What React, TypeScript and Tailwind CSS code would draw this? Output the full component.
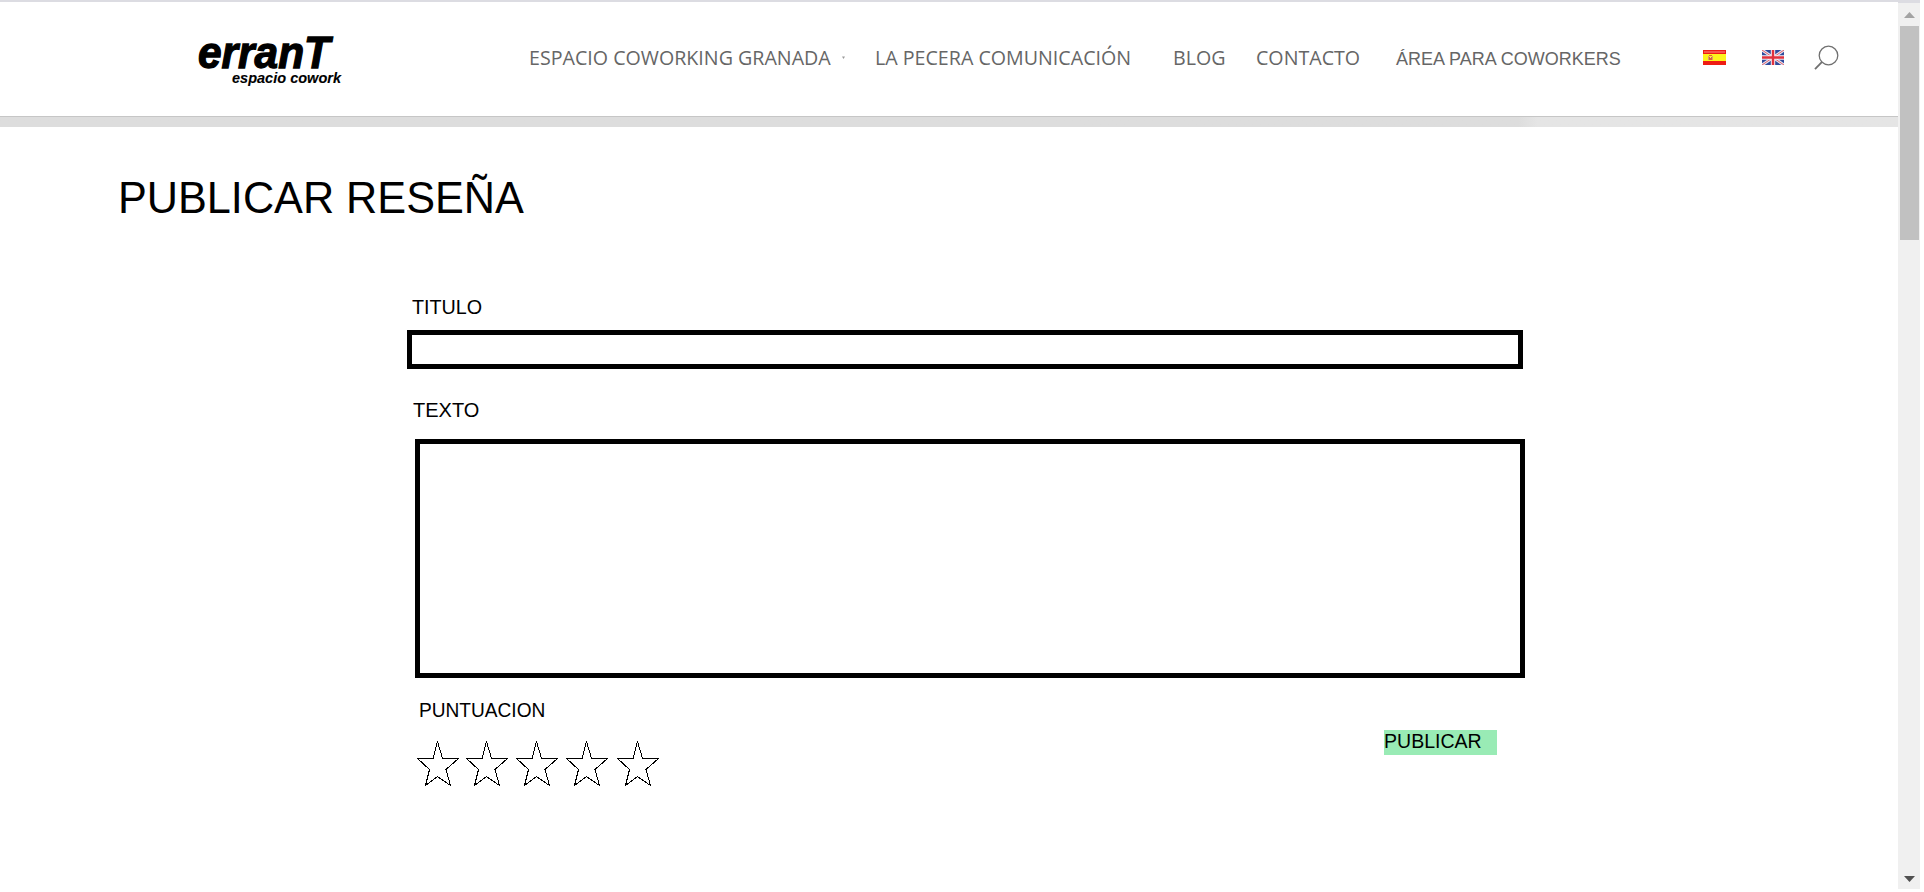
const STAR_GAPS = ["", "ml-[6px]", "ml-[7px]", "ml-[7px]", "ml-[8px]"];

function Logo() {
  return (
    <svg className="block h-[70px] w-[170px] shrink-0 overflow-visible" viewBox="0 0 170 70" fontFamily="'Liberation Sans', Arial, sans-serif" fontWeight="bold" fontStyle="italic" fill="#000" stroke="#000">
      <text x="8" y="37.800" fontSize="45" strokeWidth="1.300" textLength="132" lengthAdjust="spacingAndGlyphs">erranT</text>
      <text x="42" y="52.600" fontSize="15" strokeWidth="0.1" textLength="109" lengthAdjust="spacingAndGlyphs">espacio cowork</text>
    </svg>
  );
}

function SpainFlag() {
  return (
    <svg className="ml-[81px] mt-[48px] block h-[15px] w-[23px] shrink-0" viewBox="0 0 23 15">
      <rect width="23" height="15" fill="#ee1c14" />
      <rect x="1" y="1" width="21" height="2" fill="#f7544c" />
      <rect y="4" width="23" height="7" fill="#fdf31c" />
      <path d="M5 6h1v4H5zM9 6h1v4H9z" fill="#d8a06a" />
      <path d="M6 5h3v1H6zM6 7h3v3H6z" fill="#d5643c" />
      <path d="M7 7h1v1H7z" fill="#f5c8b0" />
    </svg>
  );
}

function UkFlag() {
  return (
    <svg className="ml-[36px] mt-[48px] block h-[15px] w-[22px] shrink-0" viewBox="0 0 22 15">
      <rect width="22" height="15" fill="#2f4a9c" />
      <path d="M0 0L22 15M22 0L0 15" stroke="#e6e6f2" strokeWidth="3" />
      <path d="M0 0L22 15M22 0L0 15" stroke="#e2606c" strokeWidth="1" />
      <path d="M11 0V15M0 7.5H22" stroke="#f4f0f6" strokeWidth="4.400" />
      <path d="M11 0V15M0 7.5H22" stroke="#e0323e" strokeWidth="2.400" />
    </svg>
  );
}

function SearchIcon() {
  return (
    <svg className="ml-[30px] mt-[43px] block h-[26px] w-[26px] shrink-0" viewBox="0 0 26 26" fill="none" stroke="#707070">
      <circle cx="14.500" cy="10.500" r="9.300" strokeWidth="1.300" />
      <path d="M7.800 17.100L1 24.100" strokeWidth="1.800" />
    </svg>
  );
}

function Star({ gap }: { gap: string }) {
  return (
    <svg className={`${gap} block h-[46px] w-[43px] shrink-0`} viewBox="0 0 43 46" fill="none" stroke="#000" strokeWidth="1" shapeRendering="crispEdges">
      <path d="M20.500 0.500L25.500 17.500H41.500L29 28.500L33.500 44.500L20.500 35.500L8.500 44.500L12.500 28.500L0.500 17.500H16Z" />
    </svg>
  );
}

function Scrollbar() {
  return (
    <div className="flex h-[889px] w-[22px] shrink-0 flex-col items-center justify-between border-t-[3px] border-[#dcdce2] bg-[#f0f0f0]">
      <div className="flex flex-col items-center">
        <svg className="block h-[23px] w-[22px]" viewBox="0 0 22 23"><path d="M6 15L11.500 9L17 15Z" fill="#a3a3a3" /></svg>
        <div className="h-[214px] w-[19px] bg-[#c1c1c1]" />
      </div>
      <svg className="block h-[17px] w-[22px]" viewBox="0 0 22 17"><path d="M6 4H17L11.500 10Z" fill="#505050" /></svg>
    </div>
  );
}

export default function App() {
  const nav = "mt-[42px] shrink-0 whitespace-nowrap font-['Open_Sans',sans-serif] text-[19.65px] leading-[28px] text-[#666]";
  const label = "h-[24px] origin-left self-start whitespace-nowrap text-[21px] leading-[22px]";
  return (
    <div className="flex h-[892px] w-[1924px] overflow-hidden bg-white font-['Liberation_Sans',Arial,sans-serif] text-black">
      <div className="flex w-[1898px] shrink-0 flex-col">
        <header className="flex h-[117px] shrink-0 items-start border-t-[2px] border-b border-t-[#dcdce2] border-b-[#c6c6c6]">
          <div className="ml-[190px] mt-[28px]"><Logo /></div>
          <nav className="flex items-start">
            <a className={`${nav} ml-[169px] w-[317px]`}>ESPACIO COWORKING GRANADA</a>
            <svg className="mt-[54px] -ml-[5px] block h-[4px] w-[5px] shrink-0" viewBox="0 0 5 4"><path d="M1 0.500H4L2.500 3Z" fill="#999" /></svg>
            <a className={`${nav} ml-[29px] w-[298px]`}>LA PECERA COMUNICACIÓN</a>
            <a className={`${nav} w-[83px]`}>BLOG</a>
            <a className={`${nav} w-[140px]`}>CONTACTO</a>
            <a className="mt-[43px] w-[226px] shrink-0 whitespace-nowrap text-[18px] leading-[28px] text-[#666]">ÁREA PARA COWORKERS</a>
          </nav>
          <SpainFlag />
          <UkFlag />
          <SearchIcon />
        </header>
        <div className="h-[10px] shrink-0 bg-gradient-to-r from-[#dddddd] from-80% to-[#e5e5e5] to-[81%]" />
        <main className="flex flex-col">
          <h1 className="ml-[118px] mt-[46px] h-[50px] origin-left scale-x-[0.982] self-start whitespace-nowrap text-[44px] leading-[50px]">PUBLICAR RESEÑA</h1>
          <form className="flex flex-col">
            <label className={`${label} ml-[412px] mt-[73px] scale-x-[0.94]`}>TITULO</label>
            <input className="ml-[407px] mt-[10px] h-[39px] w-[1116px] border-[5px] border-black" />
            <label className={`${label} ml-[413px] mt-[30px] scale-x-[0.953]`}>TEXTO</label>
            <textarea className="ml-[415px] mt-[16px] block h-[239px] w-[1110px] resize-none border-[5px] border-black" />
            <div className="ml-[415px] flex w-[1110px] items-start">
              <div className="flex flex-col">
                <span className={`${label} ml-[4px] mt-[21px] scale-x-[0.91]`}>PUNTUACION</span>
                <div className="ml-[2px] mt-[18px] flex">
                  {STAR_GAPS.map((gap, i) => (
                    <Star key={i} gap={gap} />
                  ))}
                </div>
              </div>
              <button type="button" className="mr-[28px] mt-[52px] ml-auto flex h-[25px] w-[113px] items-start bg-[#99ebb5] text-[21px] leading-[22px]">
                <span className="origin-left scale-x-[0.93] whitespace-nowrap">PUBLICAR</span>
              </button>
            </div>
          </form>
        </main>
      </div>
      <Scrollbar />
    </div>
  );
}
